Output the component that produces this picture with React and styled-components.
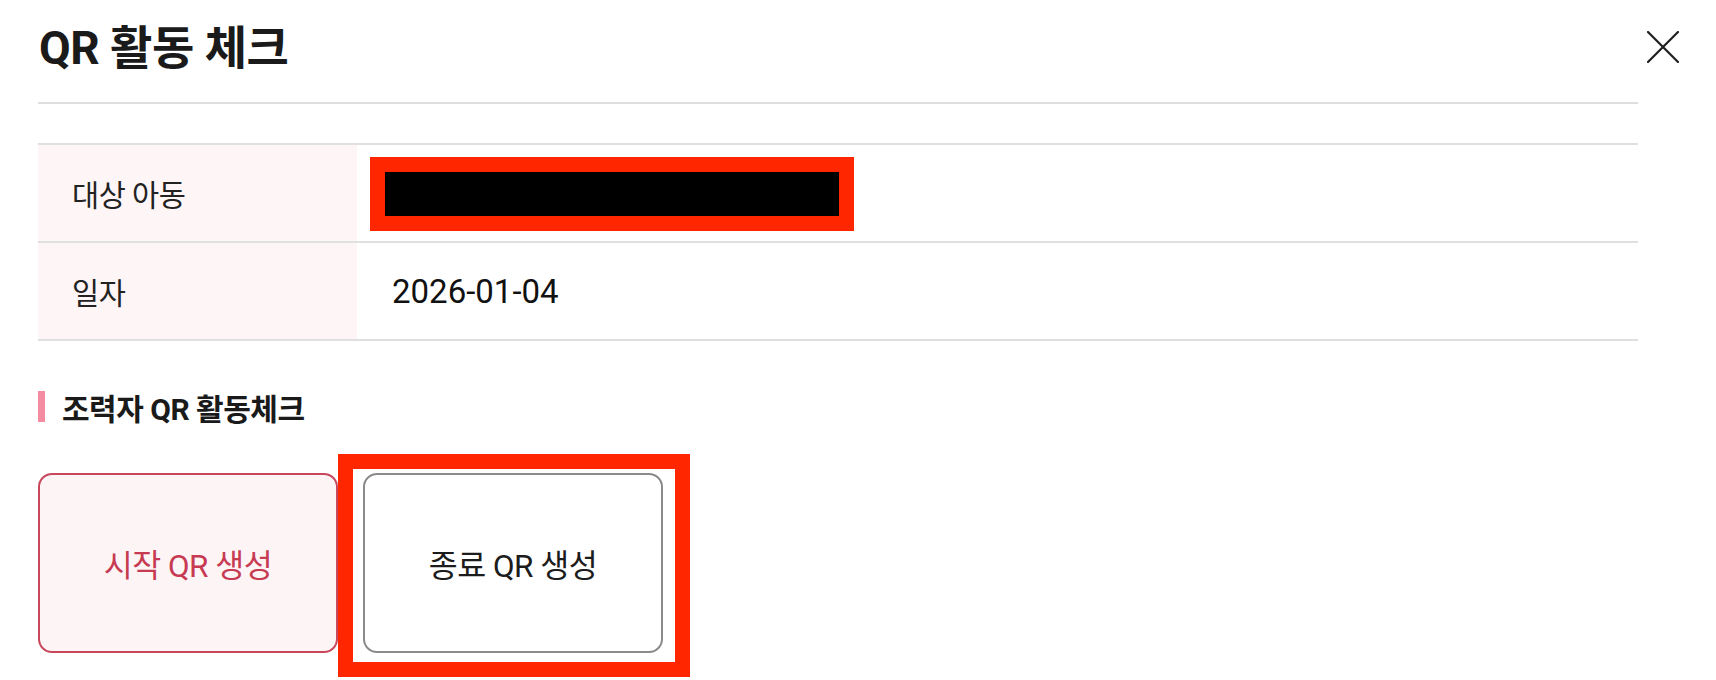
import React from 'react';
import styled, { createGlobalStyle } from 'styled-components';

const GlobalStyle = createGlobalStyle`
  html, body {
    margin: 0;
    padding: 0;
    background: #fff;
  }
  body {
    font-family: Roboto, "Noto Sans CJK KR", sans-serif;
    color: #1c1c1c;
  }
`;

const Modal = styled.div`
  position: relative;
  width: 1716px;
  height: 680px;
  box-sizing: border-box;
  padding: 0 78px 0 38px;
  overflow: hidden;
  background: #fff;
`;

const Header = styled.header`
  display: flex;
  align-items: center;
  height: 104px;
  box-sizing: border-box;
  padding-bottom: 6px;
  border-bottom: 2px solid #dedede;
`;

const Title = styled.h1`
  margin: 0 0 0 1px;
  font-size: 46px;
  line-height: 54px;
  font-weight: 700;
  color: #1a1a1a;
  letter-spacing: -0.5px;
`;

const CloseButton = styled.button`
  position: absolute;
  top: 31px;
  right: 37px;
  width: 32px;
  height: 32px;
  padding: 0;
  border: 0;
  background: none;
  cursor: pointer;
  display: flex;
`;

const InfoTable = styled.div`
  margin-top: 39px;
  border-top: 2px solid #e0e0e0;
`;

const Row = styled.div`
  display: grid;
  grid-template-columns: 319px 1fr;
  height: 98px;
  box-sizing: border-box;
  border-bottom: 2px solid #e0e0e0;
`;

const Label = styled.div`
  display: flex;
  align-items: center;
  padding-left: 34px;
  background: #fdf5f6;
  font-size: 29.5px;
  color: #222;
  letter-spacing: -0.5px;
`;

const Value = styled.div`
  display: flex;
  align-items: center;
  padding-left: 35px;
  font-size: ${p => (p.$date ? '33px' : '29px')};
  color: #111;
`;

const Redacted = styled.span`
  display: inline-block;
  width: 454px;
  height: 44px;
  margin-left: -7px;
  margin-top: 2px;
  background: #000;
  outline: 15px solid #ff2600;
`;

const SectionTitle = styled.h2`
  display: flex;
  align-items: center;
  gap: 17px;
  margin: 50px 0 0;
  height: 31px;
  font-size: 30px;
  font-weight: 700;
  color: #1a1a1a;
  letter-spacing: -0.5px;

  &::before {
    content: '';
    width: 7px;
    height: 31px;
    background: #f48ca1;
  }
`;

const ButtonRow = styled.div`
  display: flex;
  gap: 25px;
  margin-top: 51px;
`;

const QrButton = styled.button`
  position: relative;
  width: 300px;
  height: 180px;
  box-sizing: border-box;
  border-radius: 14px;
  border: 2px solid ${p => (p.$primary ? '#c9475d' : '#8a8a8a')};
  background: ${p => (p.$primary ? '#fdf4f6' : '#fff')};
  color: ${p => (p.$primary ? '#c63a52' : '#1c1c1c')};
  font-family: Roboto, "Noto Sans CJK KR", sans-serif;
  font-size: 31.5px;
  letter-spacing: -0.5px;
  cursor: pointer;
`;

const Highlight = styled.span`
  position: absolute;
  left: -27px;
  right: -29px;
  top: -21px;
  bottom: -26px;
  border: 15px solid #ff2600;
  pointer-events: none;
`;

export default function App() {
  return (
    <>
      <GlobalStyle />
      <Modal>
        <Header>
          <Title>QR 활동 체크</Title>
        </Header>
        <CloseButton aria-label="닫기">
          <svg width="32" height="32" viewBox="0 0 32 32">
            <path d="M1 1 L31 31 M31 1 L1 31" stroke="#1f1f1f" strokeWidth="2.2" strokeLinecap="round" fill="none" />
          </svg>
        </CloseButton>

        <InfoTable>
          <Row>
            <Label>대상 아동</Label>
            <Value>
              <Redacted />
            </Value>
          </Row>
          <Row>
            <Label>일자</Label>
            <Value $date>2026-01-04</Value>
          </Row>
        </InfoTable>

        <SectionTitle>조력자 QR 활동체크</SectionTitle>

        <ButtonRow>
          <QrButton $primary>시작 QR 생성</QrButton>
          <QrButton>
            종료 QR 생성
            <Highlight />
          </QrButton>
        </ButtonRow>
      </Modal>
    </>
  );
}
